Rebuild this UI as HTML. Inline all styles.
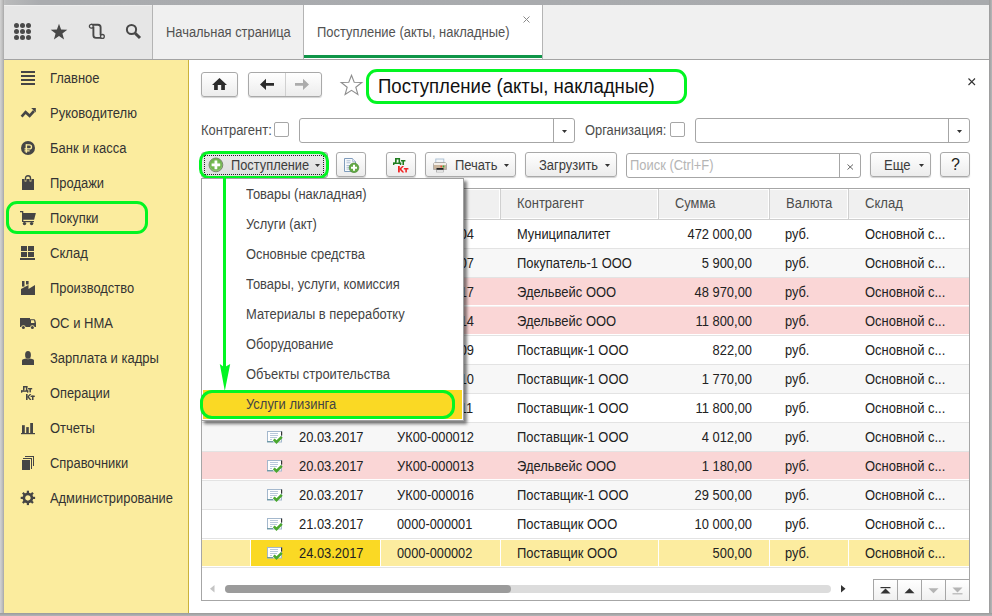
<!DOCTYPE html>
<html><head><meta charset="utf-8">
<style>
*{box-sizing:border-box;margin:0;padding:0}
html,body{width:992px;height:616px;overflow:hidden}
body{position:relative;background:#b3b4b7;font-family:"Liberation Sans",sans-serif;font-size:13px;color:#333}
.a{position:absolute}
.t{position:absolute;white-space:nowrap;line-height:15px}
.btn{position:absolute;border:1px solid #a9a9a9;border-radius:3px;background:linear-gradient(#ffffff,#ececec);box-shadow:0 1px 1px rgba(0,0,0,.18)}
.inp{position:absolute;border:1px solid #a6a6a6;border-radius:3px;background:#fff}
svg{position:absolute;overflow:visible}
</style></head><body>

<div class="a" style="left:0;top:0;width:992px;height:5px;background:linear-gradient(90deg,#d0d0d0,#b9babb 6px,#aaacaf 40px,#a8aaad)"></div>
<div class="a" style="left:0;top:0;width:4px;height:616px;background:linear-gradient(90deg,#d2d2d2,#c2c2c2 50%,#a8a8a8)"></div>
<div class="a" style="left:989px;top:0;width:3px;height:616px;background:linear-gradient(90deg,#9a9a9a,#b6b7b9)"></div>
<div class="a" style="left:0;top:613px;width:992px;height:3px;background:linear-gradient(#9a9a9a,#b4b5b8)"></div>
<div class="a" style="left:4px;top:5px;width:985px;height:608px;background:#fff"></div>
<div class="a" style="left:4px;top:5px;width:148px;height:54px;background:#e6e6e6;border-top:1px solid #eeeeee"></div>
<div class="a" style="left:152px;top:5px;width:1px;height:54px;background:#b4b4b4"></div>
<div class="a" style="left:153px;top:5px;width:150px;height:54px;background:#f0f0f0"></div>
<div class="a" style="left:303px;top:5px;width:1px;height:54px;background:#b4b4b4"></div>
<div class="a" style="left:304px;top:5px;width:238px;height:54px;background:#fff"></div>
<div class="a" style="left:542px;top:5px;width:1px;height:54px;background:#b4b4b4"></div>
<div class="a" style="left:543px;top:5px;width:446px;height:54px;background:#f0f0f0"></div>
<div class="a" style="left:304px;top:55px;width:238px;height:3px;background:#0f9548"></div>
<div class="a" style="left:4px;top:59px;width:985px;height:1px;background:#a3a3a3"></div>
<div class="t" style="left:166px;top:25px;color:#525252;font-size:14.0px;transform:scaleX(0.9209);transform-origin:left">Начальная страница</div>
<div class="t" style="left:317px;top:25px;color:#525252;font-size:14.0px;transform:scaleX(0.9237);transform-origin:left">Поступление (акты, накладные)</div>
<svg style="left:523px;top:16px" width="7" height="7"><path d="M0.5 0.5L6.5 6.5M6.5 0.5L0.5 6.5" stroke="#8a8a8a" stroke-width="1"/></svg>
<svg style="left:14px;top:23px" width="17" height="17" fill="#4a4a4a"><circle cx="2.5" cy="2.5" r="2.5"/><circle cx="2.5" cy="8.5" r="2.5"/><circle cx="2.5" cy="14.5" r="2.5"/><circle cx="8.5" cy="2.5" r="2.5"/><circle cx="8.5" cy="8.5" r="2.5"/><circle cx="8.5" cy="14.5" r="2.5"/><circle cx="14.5" cy="2.5" r="2.5"/><circle cx="14.5" cy="8.5" r="2.5"/><circle cx="14.5" cy="14.5" r="2.5"/></svg>
<svg style="left:50px;top:23px" width="18" height="18"><path d="M9 0.8L11.1 6.6L17.3 6.8L12.4 10.6L14.1 16.6L9 13.1L3.9 16.6L5.6 10.6L0.7 6.8L6.9 6.6Z" fill="#484848"/></svg>
<svg style="left:88px;top:23px" width="18" height="17"><path d="M3 1.7H10Q12.6 1.7 12.6 4.3V12.2M5.4 3.5V12.3Q5.4 14.9 8 14.9H13" fill="none" stroke="#484848" stroke-width="1.9"/><circle cx="3.3" cy="3.3" r="1.9" fill="#e6e6e6" stroke="#484848" stroke-width="1.3"/><circle cx="14.4" cy="13.4" r="1.9" fill="#e6e6e6" stroke="#484848" stroke-width="1.3"/></svg>
<svg style="left:125px;top:23px" width="17" height="17"><circle cx="6.5" cy="6.5" r="4.6" fill="none" stroke="#484848" stroke-width="2"/><path d="M10.2 10.2L15 15" stroke="#484848" stroke-width="3"/></svg>
<div class="a" style="left:4px;top:60px;width:184px;height:553px;background:#fbec9e"></div>
<div class="a" style="left:188px;top:60px;width:1px;height:553px;background:#cbb23a"></div>
<div class="t" style="left:50px;top:71px;color:#333;font-size:14.0px;transform:scaleX(0.9249);transform-origin:left">Главное</div>
<div class="t" style="left:50px;top:106px;color:#333;font-size:14.0px;transform:scaleX(0.9307);transform-origin:left">Руководителю</div>
<div class="t" style="left:50px;top:141px;color:#333;font-size:14.0px;transform:scaleX(0.9270);transform-origin:left">Банк и касса</div>
<div class="t" style="left:50px;top:176px;color:#333;font-size:14.0px;transform:scaleX(0.9237);transform-origin:left">Продажи</div>
<div class="t" style="left:50px;top:211px;color:#333;font-size:14.0px;transform:scaleX(0.9214);transform-origin:left">Покупки</div>
<div class="t" style="left:50px;top:246px;color:#333;font-size:14.0px;transform:scaleX(0.9351);transform-origin:left">Склад</div>
<div class="t" style="left:50px;top:281px;color:#333;font-size:14.0px;transform:scaleX(0.9213);transform-origin:left">Производство</div>
<div class="t" style="left:50px;top:316px;color:#333;font-size:14.0px;transform:scaleX(0.9295);transform-origin:left">ОС и НМА</div>
<div class="t" style="left:50px;top:351px;color:#333;font-size:14.0px;transform:scaleX(0.9289);transform-origin:left">Зарплата и кадры</div>
<div class="t" style="left:50px;top:386px;color:#333;font-size:14.0px;transform:scaleX(0.9147);transform-origin:left">Операции</div>
<div class="t" style="left:50px;top:421px;color:#333;font-size:14.0px;transform:scaleX(0.9248);transform-origin:left">Отчеты</div>
<div class="t" style="left:50px;top:456px;color:#333;font-size:14.0px;transform:scaleX(0.9216);transform-origin:left">Справочники</div>
<div class="t" style="left:50px;top:491px;color:#333;font-size:14.0px;transform:scaleX(0.9207);transform-origin:left">Администрирование</div>
<svg style="left:21px;top:71px" width="14" height="14" fill="#454545"><rect x="0" y="0" width="14" height="2"/><rect x="0" y="4" width="14" height="2"/><rect x="0" y="8" width="14" height="2"/><rect x="0" y="12" width="14" height="2"/></svg>
<svg style="left:20px;top:107px" width="17" height="12"><path d="M1.6 9.6L5.6 5.2L9.6 8.8L14 4" fill="none" stroke="#454545" stroke-width="2.6"/><path d="M11.2 0.9H15.8V5.6Z" fill="#454545"/></svg>
<svg style="left:21px;top:141px" width="14" height="14"><circle cx="7" cy="7" r="7" fill="#454545"/><rect x="4.6" y="3.2" width="1.5" height="8.6" fill="#fbec9e"/><path d="M5.4 3.9H8.2Q10.5 3.9 10.5 5.9Q10.5 7.9 8.2 7.9H3.5M3.5 9.8H8.6" fill="none" stroke="#fbec9e" stroke-width="1.35"/></svg>
<svg style="left:22px;top:175px" width="12" height="15"><path d="M3.5 5.5V3.2Q3.5 0.8 6 0.8Q8.5 0.8 8.5 3.2V5.5" fill="none" stroke="#454545" stroke-width="1.4"/><path d="M0 4H2.6V6.5H4.4V4H7.6V6.5H9.4V4H12V15H0Z" fill="#454545"/></svg>
<svg style="left:20px;top:210px" width="17" height="16" fill="#454545"><rect x="0" y="1" width="3" height="1.3"/><rect x="2" y="1" width="1.3" height="11"/><path d="M2 3H15.9L14.1 9.8H2Z"/><rect x="3" y="11" width="11" height="1.2"/><circle cx="4.5" cy="13.6" r="1.7"/><circle cx="11.6" cy="13.6" r="1.7"/></svg>
<svg style="left:20px;top:246px" width="15" height="14" fill="#454545"><rect x="1" y="0" width="6" height="5"/><rect x="8" y="0" width="6" height="5"/><rect x="1" y="6" width="6" height="5"/><rect x="8" y="6" width="6" height="5"/><rect x="0" y="12" width="15" height="2"/></svg>
<svg style="left:21px;top:281px" width="14" height="14" fill="#454545"><path d="M0 8L7.5 4V8L14 4V14H0Z"/><rect x="1" y="0" width="2.5" height="5.6"/><rect x="5" y="0" width="2.6" height="3.5"/></svg>
<svg style="left:20px;top:318px" width="16" height="12" fill="#454545"><path d="M0 0H10V1.2H14Q15 1.2 15.4 2.5L16 5V9H0Z"/><path d="M11 2.2H14L14.6 5H11Z" fill="#fbec9e"/><circle cx="3.4" cy="9.5" r="2.3" fill="#fbec9e"/><circle cx="3.4" cy="9.5" r="1.5"/><circle cx="12.4" cy="9.5" r="2.3" fill="#fbec9e"/><circle cx="12.4" cy="9.5" r="1.5"/></svg>
<svg style="left:22px;top:351px" width="12" height="14" fill="#454545"><ellipse cx="6" cy="3.9" rx="2.9" ry="3.9"/><path d="M0 9.5Q0 8.2 2 8L4 7.6Q6 9 8 7.6L10 8Q12 8.2 12 9.5V14H0Z"/></svg>
<svg style="left:20px;top:385px" width="16" height="9"><g fill="#454545"><rect x="3" y="1" width="4.4" height="1.5"/><path d="M3 1H4.5V5L3.8 5.8H2.3L3 4.8Z"/><rect x="5.9" y="1" width="1.5" height="5"/><rect x="1" y="5.4" width="7.3" height="1.4"/><rect x="1" y="5.4" width="1.3" height="2.3"/><rect x="7" y="5.4" width="1.3" height="2.3"/><rect x="8" y="3" width="4.2" height="1.4"/><rect x="9.4" y="3" width="1.5" height="4.4"/></g></svg>
<svg style="left:25px;top:393px" width="12" height="8"><g fill="#454545"><rect x="1" y="1" width="1.6" height="6"/><path d="M2.3 3.4L4.8 1H6.4L3.9 3.7L6.6 7H4.9L2.3 4.2Z"/><rect x="5.6" y="2.6" width="4.2" height="1.4"/><rect x="7" y="2.6" width="1.5" height="4.4"/></g></svg>
<svg style="left:21px;top:423px" width="14" height="11" fill="#454545"><rect x="1" y="2.2" width="2.8" height="8.3"/><rect x="5.2" y="4.1" width="2.6" height="6.4"/><rect x="9.2" y="0" width="2.8" height="10.5"/><rect x="0" y="10" width="14" height="1.2"/></svg>
<svg style="left:22px;top:455px" width="13" height="15" fill="#454545"><rect x="0" y="5" width="8" height="10"/><rect x="1" y="3" width="9" height="1"/><rect x="9" y="3" width="1" height="11"/><rect x="3" y="1" width="9" height="1"/><rect x="11" y="1" width="1" height="10"/></svg>
<svg style="left:21px;top:491px" width="15" height="15"><g transform="translate(6.9 6.9)" fill="#454545"><rect x="-1.1" y="-7.2" width="2.2" height="3" transform="rotate(0)"/><rect x="-1.1" y="-7.2" width="2.2" height="3" transform="rotate(45)"/><rect x="-1.1" y="-7.2" width="2.2" height="3" transform="rotate(90)"/><rect x="-1.1" y="-7.2" width="2.2" height="3" transform="rotate(135)"/><rect x="-1.1" y="-7.2" width="2.2" height="3" transform="rotate(180)"/><rect x="-1.1" y="-7.2" width="2.2" height="3" transform="rotate(225)"/><rect x="-1.1" y="-7.2" width="2.2" height="3" transform="rotate(270)"/><rect x="-1.1" y="-7.2" width="2.2" height="3" transform="rotate(315)"/><circle r="4.05" fill="none" stroke="#454545" stroke-width="2.6"/></g></svg>
<div class="a" style="left:6px;top:201px;width:142px;height:33px;border:3px solid #02f522;border-radius:11px"></div>
<div class="btn" style="left:201px;top:72px;width:37px;height:25px"></div>
<svg style="left:211px;top:77px" width="17" height="14"><path d="M8.5 1L16 8H13.9V13H10.2V8H6.8V13H3.1V8H1Z" fill="#2b2b2b"/></svg>
<div class="btn" style="left:248px;top:72px;width:74px;height:25px"></div>
<div class="a" style="left:285px;top:73px;width:1px;height:23px;background:#d0d0d0"></div>
<svg style="left:259px;top:78px" width="16" height="13"><path d="M1 6.4L7 0.8V5H15V7.8H7V12Z" fill="#2b2b2b"/></svg>
<svg style="left:294px;top:78px" width="16" height="13"><path d="M15 6.4L9 0.8V5H1V7.8H9V12Z" fill="#acacac"/></svg>
<svg style="left:340px;top:74px" width="23" height="22"><path d="M11.5 1.2L14.2 8.3L21.8 8.5L15.8 13.2L17.9 20.5L11.5 16.3L5.1 20.5L7.2 13.2L1.2 8.5L8.8 8.3Z" fill="none" stroke="#8e8e8e" stroke-width="1.1"/></svg>
<div class="t" style="left:378px;top:74.5px;font-size:20px;line-height:22px;color:#111;transform:scaleX(0.93);transform-origin:left">Поступление (акты, накладные)</div>
<div class="a" style="left:366px;top:69px;width:321px;height:35px;border:3.5px solid #02f522;border-radius:11px"></div>
<svg style="left:968px;top:78px" width="8" height="8"><path d="M0.5 0.5L7 7M7 0.5L0.5 7" stroke="#333" stroke-width="1.1"/></svg>
<div class="t" style="left:201px;top:123px;color:#4d4d4d;font-size:14.0px;transform:scaleX(0.9278);transform-origin:left">Контрагент:</div>
<div class="inp" style="left:274px;top:122px;width:15px;height:15px;border-radius:2px"></div>
<div class="inp" style="left:299px;top:118px;width:276px;height:25px"></div>
<div class="a" style="left:553px;top:119px;width:1px;height:23px;background:#a6a6a6"></div>
<svg style="left:562px;top:130px" width="6" height="3"><path d="M0 0H5L2.5 3Z" fill="#333"/></svg>
<div class="t" style="left:585px;top:123px;color:#4d4d4d;font-size:14.0px;transform:scaleX(0.9212);transform-origin:left">Организация:</div>
<div class="inp" style="left:670px;top:122px;width:15px;height:15px;border-radius:2px"></div>
<div class="inp" style="left:695px;top:118px;width:275px;height:25px"></div>
<div class="a" style="left:948px;top:119px;width:1px;height:23px;background:#a6a6a6"></div>
<svg style="left:957px;top:130px" width="6" height="3"><path d="M0 0H5L2.5 3Z" fill="#333"/></svg>
<div class="a" style="left:201px;top:152px;width:127px;height:26px;border:1px solid #9a9a9a;border-radius:3px;background:linear-gradient(#e9e9e9,#dedede)"></div>
<div class="a" style="left:204px;top:155px;width:120px;height:20px;border:1px dotted #222"></div>
<svg style="left:208px;top:157px" width="17" height="17"><defs><radialGradient id="gp" cx="0.5" cy="0.45" r="0.55"><stop offset="0" stop-color="#8fcf6a"/><stop offset="0.7" stop-color="#6db34a"/><stop offset="1" stop-color="#a9d48e"/></radialGradient></defs><circle cx="7.9" cy="7.9" r="6.9" fill="url(#gp)" stroke="#6f8068" stroke-width="0.9"/><path d="M7.9 3.6V12.2M3.6 7.9H12.2" stroke="#fff" stroke-width="2.7"/></svg>
<div class="t" style="left:231px;top:158px;color:#3c3c3c;font-size:14.0px;transform:scaleX(0.9165);transform-origin:left">Поступление</div>
<svg style="left:315px;top:164px" width="6" height="3"><path d="M0 0H5L2.5 3Z" fill="#333"/></svg>
<div class="a" style="left:199px;top:151px;width:130px;height:27.5px;border:3.5px solid #02f522;border-radius:10px"></div>
<div class="btn" style="left:336px;top:152px;width:30px;height:25px"></div>
<svg style="left:344px;top:158px" width="16" height="16"><path d="M0.5 0.5H8.5L11.5 3.5V13.5H0.5Z" fill="#f7f9fc" stroke="#7f9cbc" stroke-width="1"/><path d="M8.5 0.5V3.5H11.5" fill="#dfe8f1" stroke="#9fb3cf" stroke-width="0.7"/><path d="M2.5 2.8H6.5M2.5 4.8H6.5M2.5 7.5H8M2.5 9.3H8M2.5 11.1H6" stroke="#a3b5cc" stroke-width="0.9"/><circle cx="10" cy="9.8" r="4.8" fill="#62aa45" stroke="#4f8a3a" stroke-width="0.7"/><path d="M10 6.8V12.8M7 9.8H13" stroke="#fff" stroke-width="2"/></svg>
<div class="btn" style="left:386px;top:152px;width:30px;height:25px"></div>
<svg style="left:392px;top:157px" width="18" height="17"><g fill="#1f7d1f"><rect x="3" y="1" width="5" height="1.5"/><path d="M3 1H4.7V5.2L3.9 6.2H2.2L3 5Z"/><rect x="6.5" y="1" width="1.6" height="5.4"/><rect x="1" y="5.6" width="8.2" height="1.4"/><rect x="1" y="5.6" width="1.4" height="2.4"/><rect x="7.8" y="5.6" width="1.4" height="2.4"/><rect x="9" y="3" width="4.4" height="1.5"/><rect x="10.4" y="3" width="1.6" height="5"/></g></svg>
<svg style="left:397px;top:165px" width="14" height="9"><g fill="#f02424"><rect x="1" y="1" width="1.8" height="6.4"/><path d="M2.5 3.6L5.2 1H7L4.3 3.9L7.3 7.4H5.4L2.5 4.4Z"/><rect x="6.8" y="3" width="4.6" height="1.5"/><rect x="8.3" y="3" width="1.6" height="4.4"/></g></svg>
<div class="btn" style="left:425px;top:152px;width:91px;height:25px"></div>
<svg style="left:433px;top:158px" width="15" height="15"><rect x="2.8" y="1" width="8" height="6" fill="#f2f6fa" stroke="#a9bfd3" stroke-width="0.9"/><path d="M0.5 6.5Q0.5 4.5 2.5 4.5H11.5Q13.5 4.5 13.5 6.5V11.5H0.5Z" fill="#c9b49c" stroke="#9c9c9c" stroke-width="0.7"/><rect x="1" y="5" width="12" height="2" fill="#f4efe9"/><circle cx="8.2" cy="8.5" r="0.9" fill="#e53"/><circle cx="10.5" cy="8.5" r="0.9" fill="#3a3"/><rect x="3.5" y="10" width="7" height="2" fill="#222"/><rect x="3.5" y="12" width="7" height="2" fill="#fff" stroke="#999" stroke-width="0.6"/></svg>
<div class="t" style="left:455px;top:158px;color:#3c3c3c;font-size:14.0px;transform:scaleX(0.9253);transform-origin:left">Печать</div>
<svg style="left:504px;top:164px" width="6" height="3"><path d="M0 0H5L2.5 3Z" fill="#333"/></svg>
<div class="btn" style="left:525px;top:152px;width:92px;height:25px"></div>
<div class="t" style="left:539px;top:158px;color:#3c3c3c;font-size:14.0px;transform:scaleX(0.9246);transform-origin:left">Загрузить</div>
<svg style="left:605px;top:164px" width="6" height="3"><path d="M0 0H5L2.5 3Z" fill="#333"/></svg>
<div class="inp" style="left:626px;top:153px;width:235px;height:25px"></div>
<div class="a" style="left:839px;top:154px;width:1px;height:23px;background:#a6a6a6"></div>
<div class="t" style="left:630px;top:158px;color:#b5b5b5;font-size:14.0px;transform:scaleX(0.9228);transform-origin:left">Поиск (Ctrl+F)</div>
<svg style="left:847px;top:163.5px" width="7" height="6"><path d="M0.5 0.5L6 5.5M6 0.5L0.5 5.5" stroke="#555" stroke-width="0.9"/></svg>
<div class="btn" style="left:870px;top:152px;width:61px;height:25px"></div>
<div class="t" style="left:884px;top:158px;color:#3c3c3c;font-size:14.0px;transform:scaleX(0.9356);transform-origin:left">Еще</div>
<svg style="left:919px;top:164px" width="6" height="3"><path d="M0 0H5L2.5 3Z" fill="#333"/></svg>
<div class="btn" style="left:940px;top:152px;width:30px;height:25px"></div>
<div class="t" style="left:951px;top:156px;font-size:16px;line-height:18px;color:#222">?</div>
<div class="a" style="left:201px;top:188px;width:769px;height:413px;border:1px solid #a6a6a6;background:#fff"></div>
<div class="a" style="left:202px;top:189px;width:767px;height:30px;background:#f0f0f0"></div>
<div class="a" style="left:202px;top:219px;width:767px;height:1px;background:#cfcfcf"></div>
<div class="a" style="left:202px;top:189px;width:49px;height:30px;border:1px solid #fff;border-left:0"></div>
<div class="a" style="left:251px;top:189px;width:129px;height:30px;border:1px solid #fff;border-left:0"></div>
<div class="a" style="left:251px;top:189px;width:1px;height:30px;background:#d0d0d0"></div>
<div class="t" style="left:268px;top:196px;color:#4d4d4d;font-size:14.0px;transform:scaleX(0.9251);transform-origin:left">Дата</div>
<div class="a" style="left:380px;top:189px;width:120px;height:30px;border:1px solid #fff;border-left:0"></div>
<div class="a" style="left:380px;top:189px;width:1px;height:30px;background:#d0d0d0"></div>
<div class="t" style="left:397px;top:196px;color:#4d4d4d;font-size:14.0px;transform:scaleX(0.9168);transform-origin:left">Номер</div>
<div class="a" style="left:500px;top:189px;width:158px;height:30px;border:1px solid #fff;border-left:0"></div>
<div class="a" style="left:500px;top:189px;width:1px;height:30px;background:#d0d0d0"></div>
<div class="t" style="left:517px;top:196px;color:#4d4d4d;font-size:14.0px;transform:scaleX(0.9251);transform-origin:left">Контрагент</div>
<div class="a" style="left:658px;top:189px;width:111px;height:30px;border:1px solid #fff;border-left:0"></div>
<div class="a" style="left:658px;top:189px;width:1px;height:30px;background:#d0d0d0"></div>
<div class="t" style="left:675px;top:196px;color:#4d4d4d;font-size:14.0px;transform:scaleX(0.9173);transform-origin:left">Сумма</div>
<div class="a" style="left:769px;top:189px;width:79px;height:30px;border:1px solid #fff;border-left:0"></div>
<div class="a" style="left:769px;top:189px;width:1px;height:30px;background:#d0d0d0"></div>
<div class="t" style="left:786px;top:196px;color:#4d4d4d;font-size:14.0px;transform:scaleX(0.9344);transform-origin:left">Валюта</div>
<div class="a" style="left:848px;top:189px;width:121px;height:30px;border:1px solid #fff;border-left:0"></div>
<div class="a" style="left:848px;top:189px;width:1px;height:30px;background:#d0d0d0"></div>
<div class="t" style="left:865px;top:196px;color:#4d4d4d;font-size:14.0px;transform:scaleX(0.9351);transform-origin:left">Склад</div>
<div class="a" style="left:202px;top:220px;width:767px;height:28px;background:#ffffff"></div>
<div class="a" style="left:202px;top:248px;width:767px;height:1px;background:#e3e3e3"></div>
<svg style="left:267px;top:228px" width="17" height="14"><rect x="0.5" y="0.5" width="14" height="10.5" fill="#fff" stroke="#a4b8cd" stroke-width="1"/><rect x="3" y="2" width="8" height="1" fill="#b9c9db"/><rect x="3" y="4" width="8" height="1" fill="#b9c9db"/><rect x="3" y="6" width="7" height="1" fill="#b9c9db"/><rect x="3" y="8" width="2" height="1" fill="#b9c9db"/><rect x="0" y="10" width="6" height="1.2" fill="#6f9aa6"/><rect x="14" y="0.5" width="1.2" height="4" fill="#333"/><path d="M6.8 8.3L9.5 11.2L14.8 5.8" fill="none" stroke="#4aa82e" stroke-width="2.6"/></svg>
<div class="t" style="left:299px;top:227px;color:#222;font-size:14.0px;transform:scaleX(0.9210);transform-origin:left">20.03.2017</div>
<div class="t" style="left:397px;top:227px;color:#222;font-size:14.0px;transform:scaleX(0.9167);transform-origin:left">УК00-000004</div>
<div class="t" style="left:517px;top:227px;color:#222;font-size:14.0px;transform:scaleX(0.9201);transform-origin:left">Муниципалитет</div>
<div class="t" style="left:658px;width:94px;text-align:right;top:227px;color:#222;font-size:14.0px;transform:scaleX(0.9210);transform-origin:right">472 000,00</div>
<div class="t" style="left:785px;top:227px;color:#222;font-size:14.0px;transform:scaleX(0.9138);transform-origin:left">руб.</div>
<div class="t" style="left:865px;top:227px;color:#222;font-size:14.0px;transform:scaleX(0.9254);transform-origin:left">Основной с...</div>
<div class="a" style="left:202px;top:249px;width:767px;height:28px;background:#f7f7f7"></div>
<div class="a" style="left:202px;top:277px;width:767px;height:1px;background:#e3e3e3"></div>
<svg style="left:267px;top:257px" width="17" height="14"><rect x="0.5" y="0.5" width="14" height="10.5" fill="#fff" stroke="#a4b8cd" stroke-width="1"/><rect x="3" y="2" width="8" height="1" fill="#b9c9db"/><rect x="3" y="4" width="8" height="1" fill="#b9c9db"/><rect x="3" y="6" width="7" height="1" fill="#b9c9db"/><rect x="3" y="8" width="2" height="1" fill="#b9c9db"/><rect x="0" y="10" width="6" height="1.2" fill="#6f9aa6"/><rect x="14" y="0.5" width="1.2" height="4" fill="#333"/><path d="M6.8 8.3L9.5 11.2L14.8 5.8" fill="none" stroke="#4aa82e" stroke-width="2.6"/></svg>
<div class="t" style="left:299px;top:256px;color:#222;font-size:14.0px;transform:scaleX(0.9210);transform-origin:left">20.03.2017</div>
<div class="t" style="left:397px;top:256px;color:#222;font-size:14.0px;transform:scaleX(0.9167);transform-origin:left">УК00-000007</div>
<div class="t" style="left:517px;top:256px;color:#222;font-size:14.0px;transform:scaleX(0.9243);transform-origin:left">Покупатель-1 ООО</div>
<div class="t" style="left:658px;width:94px;text-align:right;top:256px;color:#222;font-size:14.0px;transform:scaleX(0.9230);transform-origin:right">5 900,00</div>
<div class="t" style="left:785px;top:256px;color:#222;font-size:14.0px;transform:scaleX(0.9138);transform-origin:left">руб.</div>
<div class="t" style="left:865px;top:256px;color:#222;font-size:14.0px;transform:scaleX(0.9254);transform-origin:left">Основной с...</div>
<div class="a" style="left:202px;top:278px;width:767px;height:28px;background:#fad6d6"></div>
<div class="a" style="left:202px;top:306px;width:767px;height:1px;background:#f4eeee"></div>
<div class="a" style="left:202px;top:305px;width:767px;height:1px;background:#fff"></div>
<svg style="left:267px;top:286px" width="17" height="14"><rect x="0.5" y="0.5" width="14" height="10.5" fill="#fff" stroke="#a4b8cd" stroke-width="1"/><rect x="3" y="2" width="8" height="1" fill="#b9c9db"/><rect x="3" y="4" width="8" height="1" fill="#b9c9db"/><rect x="3" y="6" width="7" height="1" fill="#b9c9db"/><rect x="3" y="8" width="2" height="1" fill="#b9c9db"/><rect x="0" y="10" width="6" height="1.2" fill="#6f9aa6"/><rect x="14" y="0.5" width="1.2" height="4" fill="#333"/><path d="M6.8 8.3L9.5 11.2L14.8 5.8" fill="none" stroke="#4aa82e" stroke-width="2.6"/></svg>
<div class="t" style="left:299px;top:285px;color:#222;font-size:14.0px;transform:scaleX(0.9210);transform-origin:left">20.03.2017</div>
<div class="t" style="left:397px;top:285px;color:#222;font-size:14.0px;transform:scaleX(0.9167);transform-origin:left">УК00-000017</div>
<div class="t" style="left:517px;top:285px;color:#222;font-size:14.0px;transform:scaleX(0.9269);transform-origin:left">Эдельвейс ООО</div>
<div class="t" style="left:658px;width:94px;text-align:right;top:285px;color:#222;font-size:14.0px;transform:scaleX(0.9219);transform-origin:right">48 970,00</div>
<div class="t" style="left:785px;top:285px;color:#222;font-size:14.0px;transform:scaleX(0.9138);transform-origin:left">руб.</div>
<div class="t" style="left:865px;top:285px;color:#222;font-size:14.0px;transform:scaleX(0.9254);transform-origin:left">Основной с...</div>
<div class="a" style="left:202px;top:307px;width:767px;height:28px;background:#fad6d6"></div>
<div class="a" style="left:202px;top:335px;width:767px;height:1px;background:#e3e3e3"></div>
<div class="a" style="left:202px;top:334px;width:767px;height:1px;background:#fff"></div>
<svg style="left:267px;top:315px" width="17" height="14"><rect x="0.5" y="0.5" width="14" height="10.5" fill="#fff" stroke="#a4b8cd" stroke-width="1"/><rect x="3" y="2" width="8" height="1" fill="#b9c9db"/><rect x="3" y="4" width="8" height="1" fill="#b9c9db"/><rect x="3" y="6" width="7" height="1" fill="#b9c9db"/><rect x="3" y="8" width="2" height="1" fill="#b9c9db"/><rect x="0" y="10" width="6" height="1.2" fill="#6f9aa6"/><rect x="14" y="0.5" width="1.2" height="4" fill="#333"/><path d="M6.8 8.3L9.5 11.2L14.8 5.8" fill="none" stroke="#4aa82e" stroke-width="2.6"/></svg>
<div class="t" style="left:299px;top:314px;color:#222;font-size:14.0px;transform:scaleX(0.9210);transform-origin:left">20.03.2017</div>
<div class="t" style="left:397px;top:314px;color:#222;font-size:14.0px;transform:scaleX(0.9167);transform-origin:left">УК00-000014</div>
<div class="t" style="left:517px;top:314px;color:#222;font-size:14.0px;transform:scaleX(0.9269);transform-origin:left">Эдельвейс ООО</div>
<div class="t" style="left:658px;width:94px;text-align:right;top:314px;color:#222;font-size:14.0px;transform:scaleX(0.9219);transform-origin:right">11 800,00</div>
<div class="t" style="left:785px;top:314px;color:#222;font-size:14.0px;transform:scaleX(0.9138);transform-origin:left">руб.</div>
<div class="t" style="left:865px;top:314px;color:#222;font-size:14.0px;transform:scaleX(0.9254);transform-origin:left">Основной с...</div>
<div class="a" style="left:202px;top:336px;width:767px;height:28px;background:#ffffff"></div>
<div class="a" style="left:202px;top:364px;width:767px;height:1px;background:#e3e3e3"></div>
<svg style="left:267px;top:344px" width="17" height="14"><rect x="0.5" y="0.5" width="14" height="10.5" fill="#fff" stroke="#a4b8cd" stroke-width="1"/><rect x="3" y="2" width="8" height="1" fill="#b9c9db"/><rect x="3" y="4" width="8" height="1" fill="#b9c9db"/><rect x="3" y="6" width="7" height="1" fill="#b9c9db"/><rect x="3" y="8" width="2" height="1" fill="#b9c9db"/><rect x="0" y="10" width="6" height="1.2" fill="#6f9aa6"/><rect x="14" y="0.5" width="1.2" height="4" fill="#333"/><path d="M6.8 8.3L9.5 11.2L14.8 5.8" fill="none" stroke="#4aa82e" stroke-width="2.6"/></svg>
<div class="t" style="left:299px;top:343px;color:#222;font-size:14.0px;transform:scaleX(0.9210);transform-origin:left">20.03.2017</div>
<div class="t" style="left:397px;top:343px;color:#222;font-size:14.0px;transform:scaleX(0.9167);transform-origin:left">УК00-000009</div>
<div class="t" style="left:517px;top:343px;color:#222;font-size:14.0px;transform:scaleX(0.9231);transform-origin:left">Поставщик-1 ООО</div>
<div class="t" style="left:658px;width:94px;text-align:right;top:343px;color:#222;font-size:14.0px;transform:scaleX(0.9197);transform-origin:right">822,00</div>
<div class="t" style="left:785px;top:343px;color:#222;font-size:14.0px;transform:scaleX(0.9138);transform-origin:left">руб.</div>
<div class="t" style="left:865px;top:343px;color:#222;font-size:14.0px;transform:scaleX(0.9254);transform-origin:left">Основной с...</div>
<div class="a" style="left:202px;top:365px;width:767px;height:28px;background:#f7f7f7"></div>
<div class="a" style="left:202px;top:393px;width:767px;height:1px;background:#e3e3e3"></div>
<svg style="left:267px;top:373px" width="17" height="14"><rect x="0.5" y="0.5" width="14" height="10.5" fill="#fff" stroke="#a4b8cd" stroke-width="1"/><rect x="3" y="2" width="8" height="1" fill="#b9c9db"/><rect x="3" y="4" width="8" height="1" fill="#b9c9db"/><rect x="3" y="6" width="7" height="1" fill="#b9c9db"/><rect x="3" y="8" width="2" height="1" fill="#b9c9db"/><rect x="0" y="10" width="6" height="1.2" fill="#6f9aa6"/><rect x="14" y="0.5" width="1.2" height="4" fill="#333"/><path d="M6.8 8.3L9.5 11.2L14.8 5.8" fill="none" stroke="#4aa82e" stroke-width="2.6"/></svg>
<div class="t" style="left:299px;top:372px;color:#222;font-size:14.0px;transform:scaleX(0.9210);transform-origin:left">20.03.2017</div>
<div class="t" style="left:397px;top:372px;color:#222;font-size:14.0px;transform:scaleX(0.9167);transform-origin:left">УК00-000010</div>
<div class="t" style="left:517px;top:372px;color:#222;font-size:14.0px;transform:scaleX(0.9231);transform-origin:left">Поставщик-1 ООО</div>
<div class="t" style="left:658px;width:94px;text-align:right;top:372px;color:#222;font-size:14.0px;transform:scaleX(0.9230);transform-origin:right">1 770,00</div>
<div class="t" style="left:785px;top:372px;color:#222;font-size:14.0px;transform:scaleX(0.9138);transform-origin:left">руб.</div>
<div class="t" style="left:865px;top:372px;color:#222;font-size:14.0px;transform:scaleX(0.9254);transform-origin:left">Основной с...</div>
<div class="a" style="left:202px;top:394px;width:767px;height:28px;background:#ffffff"></div>
<div class="a" style="left:202px;top:422px;width:767px;height:1px;background:#e3e3e3"></div>
<svg style="left:267px;top:402px" width="17" height="14"><rect x="0.5" y="0.5" width="14" height="10.5" fill="#fff" stroke="#a4b8cd" stroke-width="1"/><rect x="3" y="2" width="8" height="1" fill="#b9c9db"/><rect x="3" y="4" width="8" height="1" fill="#b9c9db"/><rect x="3" y="6" width="7" height="1" fill="#b9c9db"/><rect x="3" y="8" width="2" height="1" fill="#b9c9db"/><rect x="0" y="10" width="6" height="1.2" fill="#6f9aa6"/><rect x="14" y="0.5" width="1.2" height="4" fill="#333"/><path d="M6.8 8.3L9.5 11.2L14.8 5.8" fill="none" stroke="#4aa82e" stroke-width="2.6"/></svg>
<div class="t" style="left:299px;top:401px;color:#222;font-size:14.0px;transform:scaleX(0.9210);transform-origin:left">20.03.2017</div>
<div class="t" style="left:397px;top:401px;color:#222;font-size:14.0px;transform:scaleX(0.9167);transform-origin:left">УК00-000011</div>
<div class="t" style="left:517px;top:401px;color:#222;font-size:14.0px;transform:scaleX(0.9231);transform-origin:left">Поставщик-1 ООО</div>
<div class="t" style="left:658px;width:94px;text-align:right;top:401px;color:#222;font-size:14.0px;transform:scaleX(0.9219);transform-origin:right">11 800,00</div>
<div class="t" style="left:785px;top:401px;color:#222;font-size:14.0px;transform:scaleX(0.9138);transform-origin:left">руб.</div>
<div class="t" style="left:865px;top:401px;color:#222;font-size:14.0px;transform:scaleX(0.9254);transform-origin:left">Основной с...</div>
<div class="a" style="left:202px;top:423px;width:767px;height:28px;background:#f7f7f7"></div>
<div class="a" style="left:202px;top:451px;width:767px;height:1px;background:#e3e3e3"></div>
<svg style="left:267px;top:431px" width="17" height="14"><rect x="0.5" y="0.5" width="14" height="10.5" fill="#fff" stroke="#a4b8cd" stroke-width="1"/><rect x="3" y="2" width="8" height="1" fill="#b9c9db"/><rect x="3" y="4" width="8" height="1" fill="#b9c9db"/><rect x="3" y="6" width="7" height="1" fill="#b9c9db"/><rect x="3" y="8" width="2" height="1" fill="#b9c9db"/><rect x="0" y="10" width="6" height="1.2" fill="#6f9aa6"/><rect x="14" y="0.5" width="1.2" height="4" fill="#333"/><path d="M6.8 8.3L9.5 11.2L14.8 5.8" fill="none" stroke="#4aa82e" stroke-width="2.6"/></svg>
<div class="t" style="left:299px;top:430px;color:#222;font-size:14.0px;transform:scaleX(0.9210);transform-origin:left">20.03.2017</div>
<div class="t" style="left:397px;top:430px;color:#222;font-size:14.0px;transform:scaleX(0.9167);transform-origin:left">УК00-000012</div>
<div class="t" style="left:517px;top:430px;color:#222;font-size:14.0px;transform:scaleX(0.9231);transform-origin:left">Поставщик-1 ООО</div>
<div class="t" style="left:658px;width:94px;text-align:right;top:430px;color:#222;font-size:14.0px;transform:scaleX(0.9230);transform-origin:right">4 012,00</div>
<div class="t" style="left:785px;top:430px;color:#222;font-size:14.0px;transform:scaleX(0.9138);transform-origin:left">руб.</div>
<div class="t" style="left:865px;top:430px;color:#222;font-size:14.0px;transform:scaleX(0.9254);transform-origin:left">Основной с...</div>
<div class="a" style="left:202px;top:452px;width:767px;height:28px;background:#fad6d6"></div>
<div class="a" style="left:202px;top:480px;width:767px;height:1px;background:#e3e3e3"></div>
<div class="a" style="left:202px;top:479px;width:767px;height:1px;background:#fff"></div>
<svg style="left:267px;top:460px" width="17" height="14"><rect x="0.5" y="0.5" width="14" height="10.5" fill="#fff" stroke="#a4b8cd" stroke-width="1"/><rect x="3" y="2" width="8" height="1" fill="#b9c9db"/><rect x="3" y="4" width="8" height="1" fill="#b9c9db"/><rect x="3" y="6" width="7" height="1" fill="#b9c9db"/><rect x="3" y="8" width="2" height="1" fill="#b9c9db"/><rect x="0" y="10" width="6" height="1.2" fill="#6f9aa6"/><rect x="14" y="0.5" width="1.2" height="4" fill="#333"/><path d="M6.8 8.3L9.5 11.2L14.8 5.8" fill="none" stroke="#4aa82e" stroke-width="2.6"/></svg>
<div class="t" style="left:299px;top:459px;color:#222;font-size:14.0px;transform:scaleX(0.9210);transform-origin:left">20.03.2017</div>
<div class="t" style="left:397px;top:459px;color:#222;font-size:14.0px;transform:scaleX(0.9167);transform-origin:left">УК00-000013</div>
<div class="t" style="left:517px;top:459px;color:#222;font-size:14.0px;transform:scaleX(0.9269);transform-origin:left">Эдельвейс ООО</div>
<div class="t" style="left:658px;width:94px;text-align:right;top:459px;color:#222;font-size:14.0px;transform:scaleX(0.9230);transform-origin:right">1 180,00</div>
<div class="t" style="left:785px;top:459px;color:#222;font-size:14.0px;transform:scaleX(0.9138);transform-origin:left">руб.</div>
<div class="t" style="left:865px;top:459px;color:#222;font-size:14.0px;transform:scaleX(0.9254);transform-origin:left">Основной с...</div>
<div class="a" style="left:202px;top:481px;width:767px;height:28px;background:#f7f7f7"></div>
<div class="a" style="left:202px;top:509px;width:767px;height:1px;background:#e3e3e3"></div>
<svg style="left:267px;top:489px" width="17" height="14"><rect x="0.5" y="0.5" width="14" height="10.5" fill="#fff" stroke="#a4b8cd" stroke-width="1"/><rect x="3" y="2" width="8" height="1" fill="#b9c9db"/><rect x="3" y="4" width="8" height="1" fill="#b9c9db"/><rect x="3" y="6" width="7" height="1" fill="#b9c9db"/><rect x="3" y="8" width="2" height="1" fill="#b9c9db"/><rect x="0" y="10" width="6" height="1.2" fill="#6f9aa6"/><rect x="14" y="0.5" width="1.2" height="4" fill="#333"/><path d="M6.8 8.3L9.5 11.2L14.8 5.8" fill="none" stroke="#4aa82e" stroke-width="2.6"/></svg>
<div class="t" style="left:299px;top:488px;color:#222;font-size:14.0px;transform:scaleX(0.9210);transform-origin:left">20.03.2017</div>
<div class="t" style="left:397px;top:488px;color:#222;font-size:14.0px;transform:scaleX(0.9167);transform-origin:left">УК00-000016</div>
<div class="t" style="left:517px;top:488px;color:#222;font-size:14.0px;transform:scaleX(0.9231);transform-origin:left">Поставщик-1 ООО</div>
<div class="t" style="left:658px;width:94px;text-align:right;top:488px;color:#222;font-size:14.0px;transform:scaleX(0.9219);transform-origin:right">29 500,00</div>
<div class="t" style="left:785px;top:488px;color:#222;font-size:14.0px;transform:scaleX(0.9138);transform-origin:left">руб.</div>
<div class="t" style="left:865px;top:488px;color:#222;font-size:14.0px;transform:scaleX(0.9254);transform-origin:left">Основной с...</div>
<div class="a" style="left:202px;top:510px;width:767px;height:28px;background:#ffffff"></div>
<div class="a" style="left:202px;top:538px;width:767px;height:1px;background:#e3e3e3"></div>
<svg style="left:267px;top:518px" width="17" height="14"><rect x="0.5" y="0.5" width="14" height="10.5" fill="#fff" stroke="#a4b8cd" stroke-width="1"/><rect x="3" y="2" width="8" height="1" fill="#b9c9db"/><rect x="3" y="4" width="8" height="1" fill="#b9c9db"/><rect x="3" y="6" width="7" height="1" fill="#b9c9db"/><rect x="3" y="8" width="2" height="1" fill="#b9c9db"/><rect x="0" y="10" width="6" height="1.2" fill="#6f9aa6"/><rect x="14" y="0.5" width="1.2" height="4" fill="#333"/><path d="M6.8 8.3L9.5 11.2L14.8 5.8" fill="none" stroke="#4aa82e" stroke-width="2.6"/></svg>
<div class="t" style="left:299px;top:517px;color:#222;font-size:14.0px;transform:scaleX(0.9210);transform-origin:left">21.03.2017</div>
<div class="t" style="left:397px;top:517px;color:#222;font-size:14.0px;transform:scaleX(0.9126);transform-origin:left">0000-000001</div>
<div class="t" style="left:517px;top:517px;color:#222;font-size:14.0px;transform:scaleX(0.9251);transform-origin:left">Поставщик ООО</div>
<div class="t" style="left:658px;width:94px;text-align:right;top:517px;color:#222;font-size:14.0px;transform:scaleX(0.9219);transform-origin:right">10 000,00</div>
<div class="t" style="left:785px;top:517px;color:#222;font-size:14.0px;transform:scaleX(0.9138);transform-origin:left">руб.</div>
<div class="t" style="left:865px;top:517px;color:#222;font-size:14.0px;transform:scaleX(0.9254);transform-origin:left">Основной с...</div>
<div class="a" style="left:202px;top:539px;width:767px;height:28px;background:#fcec9f"></div>
<div class="a" style="left:202px;top:567px;width:767px;height:1px;background:#e3e3e3"></div>
<div class="a" style="left:251px;top:540px;width:129px;height:26px;background:#fad924"></div>
<div class="a" style="left:250px;top:539px;width:1px;height:28px;background:#fff"></div>
<div class="a" style="left:380px;top:539px;width:1px;height:28px;background:#fff"></div>
<div class="a" style="left:500px;top:539px;width:1px;height:28px;background:#fff"></div>
<div class="a" style="left:658px;top:539px;width:1px;height:28px;background:#fff"></div>
<div class="a" style="left:769px;top:539px;width:1px;height:28px;background:#fff"></div>
<div class="a" style="left:848px;top:539px;width:1px;height:28px;background:#fff"></div>
<div class="a" style="left:202px;top:539px;width:767px;height:1px;background:#fff"></div>
<div class="a" style="left:202px;top:566px;width:767px;height:1px;background:#fff"></div>
<svg style="left:267px;top:547px" width="17" height="14"><rect x="0.5" y="0.5" width="14" height="10.5" fill="#fff" stroke="#a4b8cd" stroke-width="1"/><rect x="3" y="2" width="8" height="1" fill="#b9c9db"/><rect x="3" y="4" width="8" height="1" fill="#b9c9db"/><rect x="3" y="6" width="7" height="1" fill="#b9c9db"/><rect x="3" y="8" width="2" height="1" fill="#b9c9db"/><rect x="0" y="10" width="6" height="1.2" fill="#6f9aa6"/><rect x="14" y="0.5" width="1.2" height="4" fill="#333"/><path d="M6.8 8.3L9.5 11.2L14.8 5.8" fill="none" stroke="#4aa82e" stroke-width="2.6"/></svg>
<div class="t" style="left:299px;top:546px;color:#222;font-size:14.0px;transform:scaleX(0.9210);transform-origin:left">24.03.2017</div>
<div class="t" style="left:397px;top:546px;color:#222;font-size:14.0px;transform:scaleX(0.9126);transform-origin:left">0000-000002</div>
<div class="t" style="left:517px;top:546px;color:#222;font-size:14.0px;transform:scaleX(0.9251);transform-origin:left">Поставщик ООО</div>
<div class="t" style="left:658px;width:94px;text-align:right;top:546px;color:#222;font-size:14.0px;transform:scaleX(0.9197);transform-origin:right">500,00</div>
<div class="t" style="left:785px;top:546px;color:#222;font-size:14.0px;transform:scaleX(0.9138);transform-origin:left">руб.</div>
<div class="t" style="left:865px;top:546px;color:#222;font-size:14.0px;transform:scaleX(0.9254);transform-origin:left">Основной с...</div>
<svg style="left:210px;top:585px" width="5" height="8"><path d="M4.5 0V7.5L0 3.75Z" fill="#c4c4c4"/></svg>
<div class="a" style="left:225px;top:585px;width:606px;height:8px;border-radius:4px;background:#dcdcdc"></div>
<div class="a" style="left:225px;top:585px;width:286px;height:8px;border-radius:4px;background:#9b9b9b"></div>
<svg style="left:841px;top:585px" width="5" height="8"><path d="M0 0V7.5L4.5 3.75Z" fill="#333"/></svg>
<div class="a" style="left:873px;top:579px;width:97px;height:22px;border:1px solid #a6a6a6;background:linear-gradient(#fff,#f0f0f0)"></div>
<div class="a" style="left:897px;top:580px;width:1px;height:20px;background:#a6a6a6"></div>
<div class="a" style="left:921px;top:580px;width:1px;height:20px;background:#a6a6a6"></div>
<div class="a" style="left:945px;top:580px;width:1px;height:20px;background:#a6a6a6"></div>
<svg style="left:880px;top:587px" width="11" height="7"><path d="M0.5 0.6H10.5" stroke="#333" stroke-width="1.2"/><path d="M5.5 1.5L10.5 6.5H0.5Z" fill="#333"/></svg>
<svg style="left:904px;top:588px" width="11" height="6"><path d="M5.5 0.3L10.5 5.3H0.5Z" fill="#333"/></svg>
<svg style="left:928px;top:588px" width="11" height="6"><path d="M5.5 5.3L10.5 0.3H0.5Z" fill="#b4b4b4"/></svg>
<svg style="left:952px;top:587px" width="11" height="8"><path d="M5.5 5.5L10.5 0.5H0.5Z" fill="#b4b4b4"/><path d="M0.5 6.8H10.5" stroke="#b4b4b4" stroke-width="1.2"/></svg>
<div class="a" style="left:201px;top:178px;width:263px;height:243px;border:1px solid #a0a0a0;background:#fff;box-shadow:3px 3px 3px rgba(0,0,0,.5)"></div>
<div class="t" style="left:246px;top:187px;color:#444;font-size:14.0px;transform:scaleX(0.9244);transform-origin:left">Товары (накладная)</div>
<div class="t" style="left:246px;top:217px;color:#444;font-size:14.0px;transform:scaleX(0.9222);transform-origin:left">Услуги (акт)</div>
<div class="t" style="left:246px;top:247px;color:#444;font-size:14.0px;transform:scaleX(0.9192);transform-origin:left">Основные средства</div>
<div class="t" style="left:246px;top:277px;color:#444;font-size:14.0px;transform:scaleX(0.9231);transform-origin:left">Товары, услуги, комиссия</div>
<div class="t" style="left:246px;top:307px;color:#444;font-size:14.0px;transform:scaleX(0.9227);transform-origin:left">Материалы в переработку</div>
<div class="t" style="left:246px;top:337px;color:#444;font-size:14.0px;transform:scaleX(0.9174);transform-origin:left">Оборудование</div>
<div class="t" style="left:246px;top:367px;color:#444;font-size:14.0px;transform:scaleX(0.9228);transform-origin:left">Объекты строительства</div>
<div class="a" style="left:203px;top:390px;width:259px;height:29px;background:#fad924"></div>
<div class="t" style="left:246px;top:397px;color:#444;font-size:14.0px;transform:scaleX(0.9251);transform-origin:left">Услуги лизинга</div>
<div class="a" style="left:200px;top:390px;width:255px;height:29px;border:3px solid #02f522;border-radius:12px"></div>
<div class="a" style="left:223px;top:176px;width:3px;height:200px;background:#02f522"></div>
<svg style="left:219px;top:363px" width="12" height="29"><path d="M0.8 1Q4 3 5.5 4.5Q7 3 11.2 1L5.8 28Z" fill="#02f522"/></svg>
</body></html>
